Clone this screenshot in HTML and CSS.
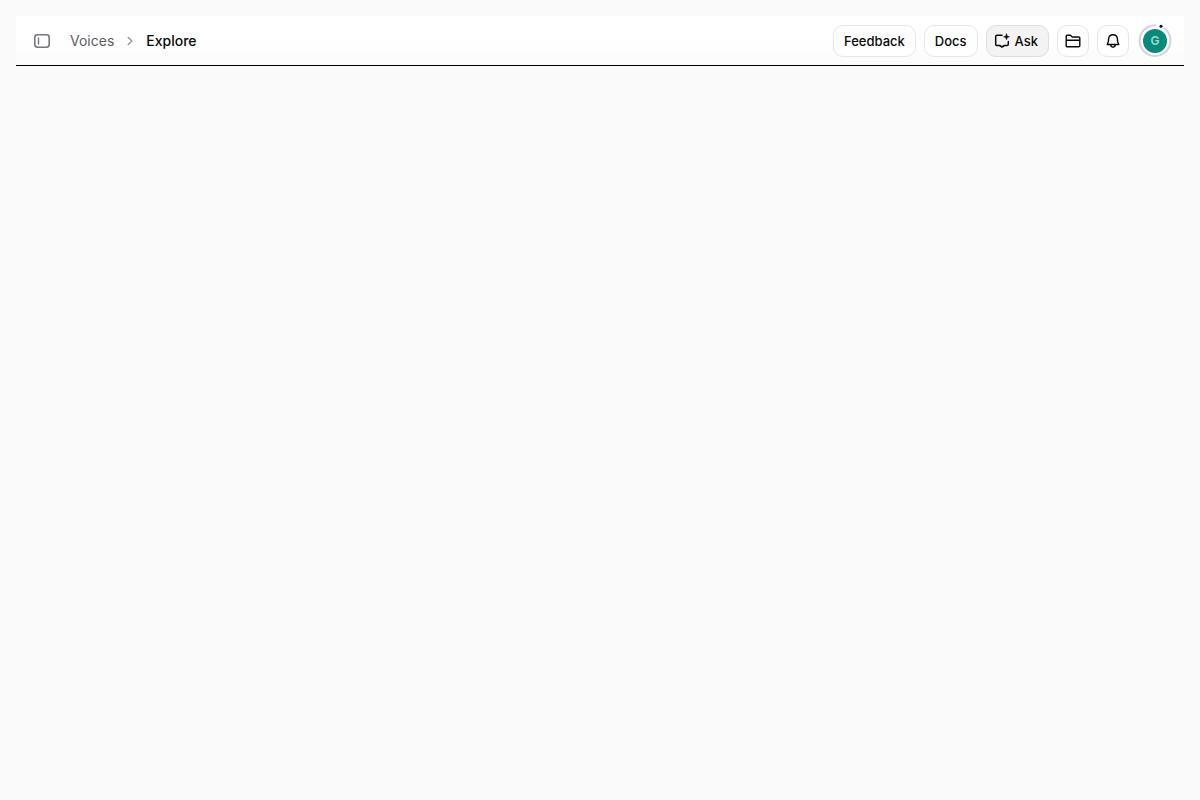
FILE: index.html
```html
<!DOCTYPE html>
<html lang="en">
<head>
<meta charset="utf-8">
<meta name="viewport" content="width=device-width, initial-scale=1">
<title>Explore</title>
<link rel="stylesheet" href="styles.css">
</head>
<body>
<header class="topbar">
  <div class="topbar-start">
    <button class="sidebar-toggle" type="button" aria-label="Toggle sidebar">
      <svg width="20" height="20" viewBox="0 0 20 20" fill="none" stroke="currentColor" stroke-linecap="round"><rect x="2.8" y="3.8" width="14.4" height="12.4" rx="2.6" stroke-width="1.6"/><path d="M6.500 7v6" stroke-width="1.4"/></svg>
    </button>
    <nav class="breadcrumb" aria-label="Breadcrumb">
      <a class="crumb" href="#">Voices</a>
      <svg class="chevron" width="16" height="16" viewBox="0 0 16 16" fill="none" stroke="currentColor" stroke-width="1.6" stroke-linecap="round" stroke-linejoin="round"><path d="M6.300 4.500 9.800 8l-3.500 3.500"/></svg>
      <a class="crumb crumb-current" href="#" aria-current="page">Explore</a>
    </nav>
  </div>
  <div class="actions">
    <button class="btn" type="button">Feedback</button>
    <button class="btn" type="button">Docs</button>
    <button class="btn btn-ask" type="button">
      <svg width="16" height="16" viewBox="0 0 16 16" fill="none" stroke="currentColor" stroke-width="1.5" stroke-linejoin="round" stroke-linecap="round"><path d="M8 2.300H3A1.300 1.300 0 0 0 1.700 3.600V11.200A1.300 1.300 0 0 0 3 12.500H5.600L8 14l2.400-1.500H13A1.300 1.300 0 0 0 14.300 11.200V8.500"/><path d="M12.500.6l.9 2.300 2.300.9-2.300.9-.9 2.300-.9-2.300-2.300-.9 2.300-.9z" fill="currentColor" stroke="currentColor" stroke-width=".3"/></svg>
      Ask
    </button>
    <button class="btn btn-icon" type="button" aria-label="Files">
      <svg width="16" height="16" viewBox="0 0 16 16" fill="none" stroke="currentColor" stroke-width="1.4" stroke-linejoin="round"><path d="M1.200 12.800V3.200A1 1 0 0 1 2.200 2.200H5.400L7.300 4H13.800A1 1 0 0 1 14.800 5V12.800A1 1 0 0 1 13.800 13.800H2.200A1 1 0 0 1 1.200 12.800ZM1.200 7.200H14.800"/></svg>
    </button>
    <button class="btn btn-icon" type="button" aria-label="Notifications">
      <svg width="16" height="16" viewBox="0 0 16 16" fill="none" stroke="currentColor" stroke-width="1.4" stroke-linejoin="round" stroke-linecap="round"><path d="M8 1.700C5.500 1.700 3.800 3.400 3.600 5.800L3.400 8.500 2.200 11.500H13.800L12.600 8.500 12.400 5.800C12.200 3.400 10.500 1.700 8 1.700ZM5.600 12C5.900 13.400 6.800 14.200 8 14.200S10.100 13.400 10.400 12"/></svg>
    </button>
    <button class="avatar" type="button" aria-label="Account">
      <svg width="36" height="36" viewBox="0 0 36 36" fill="none" stroke-width="2" stroke-linecap="round"><path d="M27.300 5.300A15.400 15.400 0 1 1 18.300 2.200" stroke="#d1d5db"/><circle cx="24" cy="3.200" r="1.500" fill="#000"/></svg>
      <span class="avatar-letter">G</span>
    </button>
  </div>
</header>
</body>
</html>
```
FILE: styles.css
```css
* { box-sizing: border-box; }

body {
  margin: 0;
  padding: 16px;
  background: #fafafa;
  color: #0a0a0a;
  font-family: Inter, "Liberation Sans", sans-serif;
  font-size: 14px;
  line-height: 20px;
}

button {
  margin: 0;
  padding: 0;
  border: 0;
  background: none;
  color: inherit;
  font: inherit;
}

svg { display: block; }

.topbar {
  display: flex;
  align-items: center;
  justify-content: space-between;
  height: 50px;
  padding: 0 11px 0 16px;
  border-bottom: 1px solid #000;
  background: linear-gradient(#fff 40%, #fbfbfb);
}

.topbar-start {
  display: flex;
  align-items: center;
  gap: 18px;
}

.sidebar-toggle { color: #77777f; }

.breadcrumb {
  display: flex;
  align-items: center;
  gap: 8px;
}

.crumb {
  color: #5c5c64;
  text-decoration: none;
}

.crumb-current {
  color: #0a0a0a;
  font-weight: 500;
}

.chevron { color: #9a9aa2; }

.actions {
  display: flex;
  align-items: center;
  gap: 8px;
}

.btn {
  display: flex;
  align-items: center;
  justify-content: center;
  gap: 5px;
  height: 32px;
  padding: 0 10px;
  border: 1px solid #e6e6e8;
  border-radius: 10px;
  background: #fff;
  font-size: 13px;
  font-weight: 500;
}

.btn-ask {
  padding-left: 7px;
  border-color: #dedee0;
  background: #f3f3f3;
}

.btn-icon {
  width: 32px;
  padding: 0;
}

.avatar {
  position: relative;
  width: 36px;
  height: 36px;
}

.avatar-letter {
  position: absolute;
  inset: 6px;
  border-radius: 50%;
  background: #07897b;
  color: #a5d8d2;
  font-size: 12px;
  font-weight: 600;
  line-height: 24px;
  text-align: center;
}
```
